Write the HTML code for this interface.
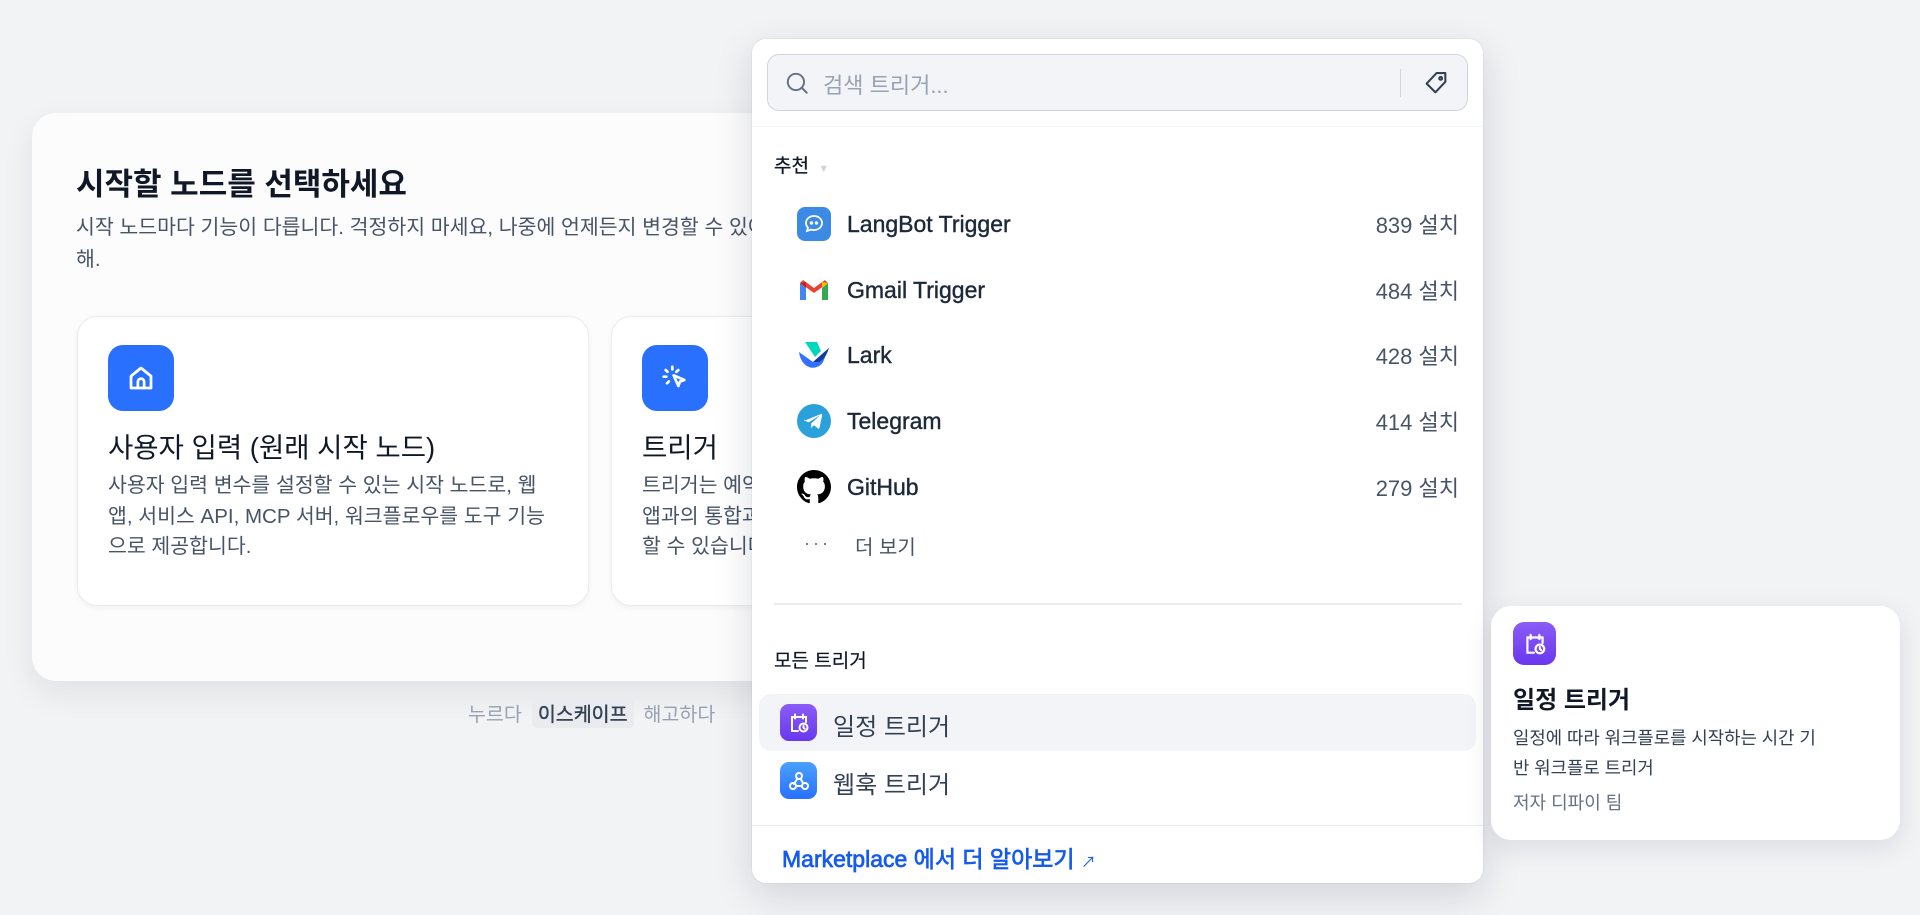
<!DOCTYPE html>
<html><head><meta charset="utf-8"><style>
*{box-sizing:border-box;margin:0;padding:0}
body{width:1920px;height:915px;overflow:hidden;background:#f2f3f5;font-family:"Liberation Sans","Noto Sans CJK KR",sans-serif;color:#101828;position:relative}
.abs{position:absolute}
.main{left:32px;top:113px;width:760px;height:568px;background:#fcfcfd;border-radius:24px;box-shadow:0 12px 32px rgba(16,24,40,.08);overflow:hidden}
.card{position:absolute;top:203px;height:290px;background:#fff;border:1.5px solid #eaecf0;border-radius:20px;box-shadow:0 2px 6px rgba(16,24,40,.05)}
.ic{position:absolute;left:30px;top:28px;width:66px;height:66px;border-radius:15px;background:#2970ff;display:flex;align-items:center;justify-content:center}
.ctitle{position:absolute;left:30px;top:108px;font-size:27.5px;color:#101828;white-space:nowrap}
.cdesc{position:absolute;left:30px;top:154px;font-size:20.5px;line-height:30.5px;color:#475467;white-space:nowrap}
.pop{left:752px;top:39px;width:731px;height:844px;background:#fff;border-radius:14px;box-shadow:0 12px 40px rgba(16,24,40,.14),0 0 0 1px rgba(16,24,40,.04)}
.row{position:absolute;left:45px;width:662px;height:40px;display:flex;align-items:center}
.row .i{width:34px;height:34px;display:flex;align-items:center;justify-content:center;border-radius:8px}
.row .n{margin-left:16px;font-size:23px;color:#1d2939;-webkit-text-stroke:.4px #1d2939}
.row .c{margin-left:auto;font-size:22px;color:#475467}
.tip{left:1491px;top:606px;width:409px;height:234px;background:#fff;border-radius:20px;box-shadow:0 8px 28px rgba(16,24,40,.1)}
</style></head><body>

<div class="abs main">
  <div class="abs" style="left:44px;top:46px;font-size:31px;font-weight:bold;white-space:nowrap">시작할 노드를 선택하세요</div>
  <div class="abs" style="left:44px;top:99px;font-size:20.5px;line-height:32px;color:#475467;white-space:nowrap">시작 노드마다 기능이 다릅니다. 걱정하지 마세요, 나중에 언제든지 변경할 수 있어요<br>해.</div>
  <div class="card" style="left:45px;width:512px">
    <div class="ic"><svg width="30" height="30" viewBox="0 0 24 24" fill="none" stroke="#fff" stroke-width="2.2" stroke-linejoin="round"><path d="M4 10.5 12 4l8 6.5V20H4z"/><path d="M9.5 20v-5a2.5 2.5 0 0 1 5 0v5"/></svg></div>
    <div class="ctitle">사용자 입력 (원래 시작 노드)</div>
    <div class="cdesc">사용자 입력 변수를 설정할 수 있는 시작 노드로, 웹<br>앱, 서비스 API, MCP 서버, 워크플로우를 도구 기능<br>으로 제공합니다.</div>
  </div>
  <div class="card" style="left:579px;width:512px">
    <div class="ic"><svg width="32" height="32" viewBox="0 0 24 24" fill="none" stroke="#fff" stroke-width="2" stroke-linecap="round" stroke-linejoin="round"><path d="M11 10l8 3.5-3.3 1.2L14.5 18z"/><path d="M10 3.5v2M5 6l1.4 1.4M3.5 11h2M6 16l1.4-1.4M14.5 6 13 7.4"/></svg></div>
    <div class="ctitle">트리거</div>
    <div class="cdesc">트리거는 예약된 작업, 사용자 정의 웹훅 또는 다른<br>앱과의 통합과 같은 외부 이벤트에 반응하여 시작<br>할 수 있습니다.</div>
  </div>
</div>

<div class="abs" style="left:468px;top:697px;font-size:19.5px;color:#98a2b3;white-space:nowrap;display:flex;align-items:center;gap:10px">누르다 <span style="background:#e9ebef;color:#344054;border-radius:5px;padding:1px 6px;-webkit-text-stroke:.4px #344054">이스케이프</span> 해고하다</div>

<div class="abs pop">
  <div class="abs" style="left:15px;top:15px;width:701px;height:57px;background:#f2f4f7;border:1.5px solid #d0d5dd;border-radius:12px">
    <svg class="abs" style="left:16px;top:15px" width="26" height="26" viewBox="0 0 24 24" fill="none" stroke="#667085" stroke-width="1.8"><circle cx="11" cy="11" r="7.5"/><path d="M16.5 16.5 21 21" stroke-linecap="round"/></svg>
    <div class="abs" style="left:55px;top:13px;font-size:22px;color:#98a2b3">검색 트리거...</div>
    <div class="abs" style="left:632px;top:14px;width:1px;height:28px;background:#d0d5dd"></div>
    <svg class="abs" style="left:654px;top:14px" width="28" height="28" viewBox="0 0 24 24" fill="none" stroke="#344054" stroke-width="1.8" stroke-linejoin="round"><path d="M12.5 3.5H20v7.5l-8.5 9-7.5-7.5z"/><circle cx="16" cy="8" r="1.2"/></svg>
  </div>
  <div class="abs" style="left:0;top:87px;width:731px;height:1px;background:#f2f4f7"></div>
  <div class="abs" style="left:22px;top:112px;font-size:19px;color:#101828;-webkit-text-stroke:.3px #101828">추천 <span style="color:#d0d5dd;font-size:11px;margin-left:4px;-webkit-text-stroke:0">▼</span></div>

  <div class="row" style="top:165px"><div class="i" style="background:#3b8be6"><svg width="24" height="24" viewBox="0 0 24 24" fill="none" stroke="#fff" stroke-width="1.8"><path d="M12 4c4.5 0 8 3 8 7s-3.5 7-8 7c-1 0-2-.1-3-.4L5 19l1-3.3C4.7 14.4 4 12.8 4 11c0-4 3.5-7 8-7z"/><circle cx="9.5" cy="11" r=".8" fill="#fff"/><circle cx="14.5" cy="11" r=".8" fill="#fff"/></svg></div><div class="n">LangBot Trigger</div><div class="c">839 설치</div></div>
  <div class="row" style="top:231px"><div class="i"><svg width="32" height="26" viewBox="0 0 32 24"><path d="M2 5v17h6V10z" fill="#4285f4"/><path d="M24 10v12h6V5z" fill="#34a853"/><path d="M2 5l14 10 14-10-3-3-11 8L5 2z" fill="#ea4335"/><path d="M24 4l6 1v0l-6 5z" fill="#fbbc04"/><path d="M2 5l6 5V4z" fill="#c5221f"/></svg></div><div class="n">Gmail Trigger</div><div class="c">484 설치</div></div>
  <div class="row" style="top:296px"><div class="i"><svg width="34" height="30" viewBox="0 0 34 30"><path d="M8 2h12l4 9-6 6z" fill="#00d6b9"/><path d="M2 12l14 10 16-14-6 14c-3 5-9 7-14 5-5-2-9-7-10-15z" fill="#3370ff"/><path d="M16 22l16-14c-2 7-6 12-10 14z" fill="#133c9a"/></svg></div><div class="n">Lark</div><div class="c">428 설치</div></div>
  <div class="row" style="top:362px"><div class="i"><svg width="34" height="34" viewBox="0 0 34 34"><circle cx="17" cy="17" r="17" fill="#2aa1da"/><path d="M8 16.5l16-6.5c.8-.3 1.4.2 1.2 1.2l-2.7 12.5c-.2.9-.8 1.1-1.5.7l-4.2-3.1-2 2c-.3.3-.5.4-.9.4l.3-4.3 7.8-7c.3-.3-.1-.5-.5-.2l-9.6 6-4.1-1.3c-.9-.3-.9-.9.2-1.4z" fill="#fff"/></svg></div><div class="n">Telegram</div><div class="c">414 설치</div></div>
  <div class="row" style="top:428px"><div class="i"><svg width="34" height="34" viewBox="0 0 16 16"><path fill="#000" d="M8 0C3.58 0 0 3.58 0 8c0 3.540 2.29 6.530 5.470 7.590.4.07.55-.17.55-.38 0-.19-.01-.82-.01-1.49-2.010.37-2.530-.49-2.690-.94-.09-.23-.48-.94-.82-1.130-.28-.15-.68-.52-.01-.53.63-.01 1.080.58 1.230.82.72 1.210 1.870.87 2.330.66.07-.52.28-.87.51-1.070-1.780-.2-3.640-.89-3.640-3.950 0-.87.31-1.590.82-2.150-.08-.2-.36-1.020.08-2.120 0 0 .67-.21 2.200.82.64-.18 1.320-.27 2-.27.68 0 1.360.09 2 .27 1.530-1.040 2.200-.82 2.200-.82.44 1.100.16 1.920.08 2.120.51.56.82 1.270.82 2.150 0 3.070-1.870 3.750-3.650 3.950.29.25.54.73.54 1.480 0 1.070-.01 1.930-.01 2.200 0 .21.15.46.55.38A8.013 8.013 0 0016 8c0-4.420-3.580-8-8-8z"/></svg></div><div class="n">GitHub</div><div class="c">279 설치</div></div>
  <div class="abs" style="left:52px;top:494px;font-size:18px;color:#667085;letter-spacing:3px">···</div>
  <div class="abs" style="left:103px;top:492px;font-size:20px;color:#475467">더 보기</div>

  <div class="abs" style="left:22px;top:564px;width:688px;height:2px;background:#eaecf0"></div>
  <div class="abs" style="left:22px;top:607px;font-size:19px;color:#101828;-webkit-text-stroke:.2px #101828">모든 트리거</div>

  <div class="abs" style="left:7px;top:655px;width:717px;height:57px;background:#f2f4f7;border-radius:12px"></div>
  <div class="abs" style="left:28px;top:665px;width:37px;height:37px;border-radius:9px;background:linear-gradient(#8b5cf6,#6938ef);display:flex;align-items:center;justify-content:center"><svg width="24" height="24" viewBox="0 0 24 24" fill="none" stroke="#fff" stroke-width="2" stroke-linecap="round"><path d="M11 20H5V6h14v5M8 3.5v4M16 3.5v4"/><circle cx="16.5" cy="16.5" r="4"/><path d="M16.5 14.8v1.8l1.2 1"/></svg></div>
  <div class="abs" style="left:81px;top:668px;font-size:24px;color:#344054">일정 트리거</div>
  <div class="abs" style="left:28px;top:723px;width:37px;height:37px;border-radius:9px;background:linear-gradient(#4ba1ff,#2970ff);display:flex;align-items:center;justify-content:center"><svg width="24" height="24" viewBox="0 0 24 24" fill="none" stroke="#fff" stroke-width="2" stroke-linecap="round"><circle cx="12" cy="7" r="3"/><circle cx="6" cy="17" r="3"/><circle cx="18" cy="17" r="3"/><path d="M10.5 9.5 7 15M13.5 9.5 16 14M9 17h6"/></svg></div>
  <div class="abs" style="left:81px;top:726px;font-size:24px;color:#344054">웹훅 트리거</div>

  <div class="abs" style="left:0;top:786px;width:731px;height:1px;background:#eaecf0"></div>
  <div class="abs" style="left:30px;top:801px;font-size:23px;color:#155aef;white-space:nowrap;-webkit-text-stroke:.7px #155aef">Marketplace 에서 더 알아보기 <span style="font-size:15px;-webkit-text-stroke:0">↗</span></div>
</div>

<div class="abs tip">
  <div class="abs" style="left:22px;top:16px;width:43px;height:43px;border-radius:11px;background:linear-gradient(#8b5cf6,#6938ef);display:flex;align-items:center;justify-content:center"><svg width="26" height="26" viewBox="0 0 24 24" fill="none" stroke="#fff" stroke-width="2" stroke-linecap="round"><path d="M11 20H5V6h14v5M8 3.5v4M16 3.5v4"/><circle cx="16.5" cy="16.5" r="4"/><path d="M16.5 14.8v1.8l1.2 1"/></svg></div>
  <div class="abs" style="left:22px;top:74px;font-size:24px;font-weight:bold;color:#101828">일정 트리거</div>
  <div class="abs" style="left:22px;top:117px;font-size:17.8px;line-height:30px;color:#344054;white-space:nowrap">일정에 따라 워크플로를 시작하는 시간 기<br>반 워크플로 트리거</div>
  <div class="abs" style="left:22px;top:183px;font-size:18px;color:#667085">저자 디파이 팀</div>
</div>
</body></html>
